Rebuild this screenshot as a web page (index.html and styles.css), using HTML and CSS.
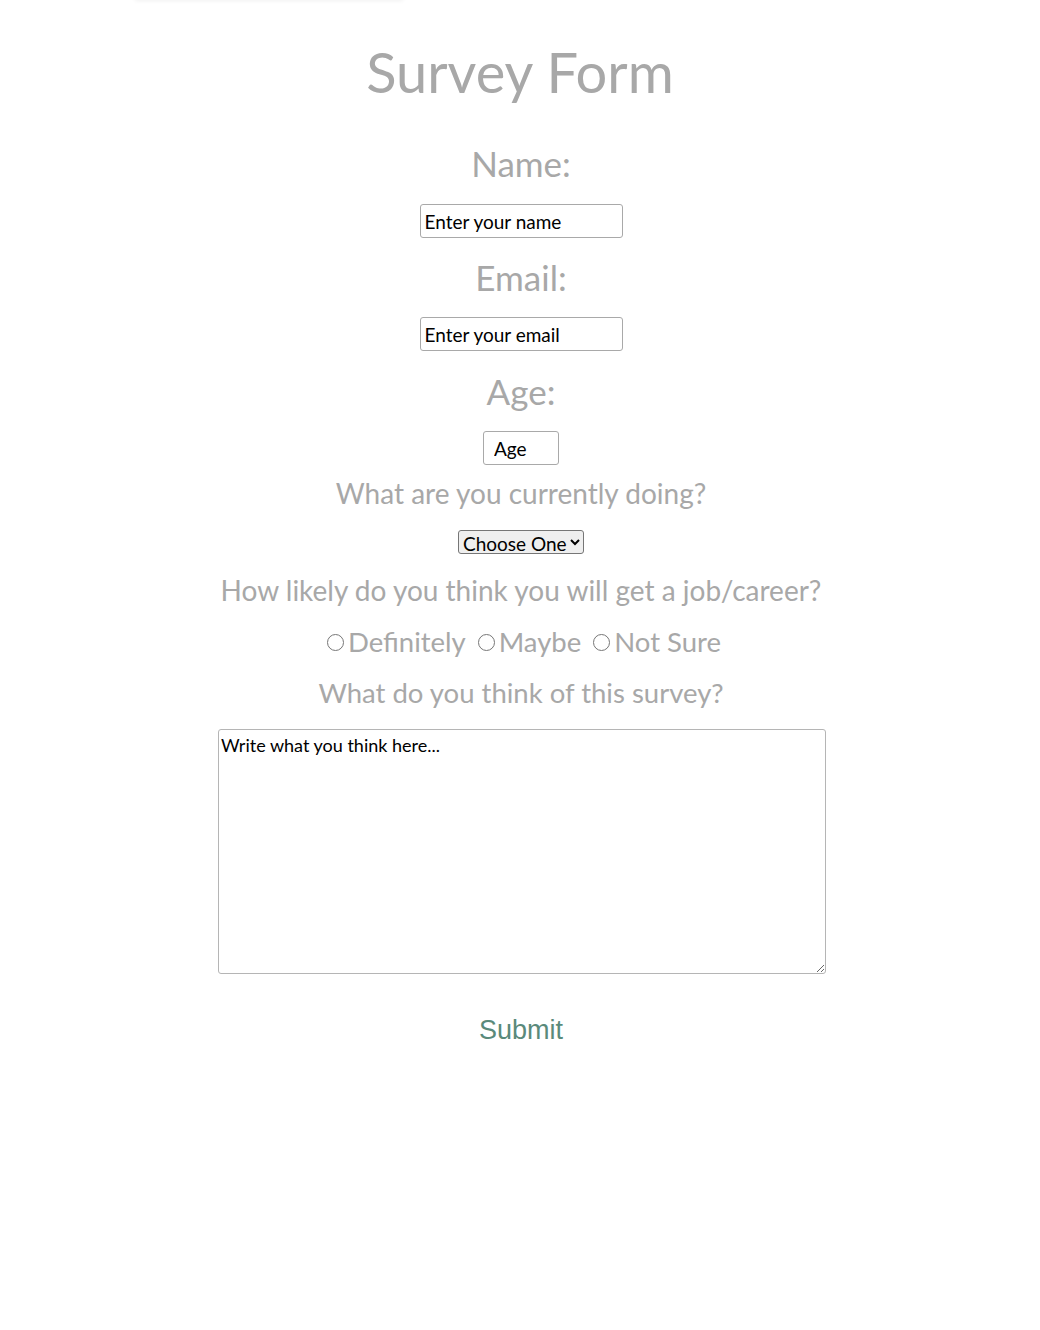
FILE: index.html
```html
<!DOCTYPE html>
<html lang="en">
<head>
<meta charset="utf-8">
<title>Survey Form</title>
<link rel="stylesheet" href="styles.css">
</head>
<body>
<div class="ghost"></div>
<main class="page">
  <h1 class="title">Survey Form</h1>
  <form class="form">
    <label class="label label-name" for="name">Name:</label>
    <input class="field" id="name" type="text" placeholder="Enter your name">
    <label class="label" for="email">Email:</label>
    <input class="field" id="email" type="email" placeholder="Enter your email">
    <label class="label label-age" for="age">Age:</label>
    <input class="field field-age" id="age" type="text" placeholder="Age">
    <label class="question q-doing" for="doing">What are you currently doing?</label>
    <select class="select" id="doing">
      <option>Choose One</option>
      <option>Student</option>
      <option>Working</option>
    </select>
    <p class="question q-likely">How likely do you think you will get a job/career?</p>
    <div class="radios">
      <label class="radio"><input type="radio" name="likely"><span>Definitely</span></label>
      <label class="radio"><input type="radio" name="likely"><span>Maybe</span></label>
      <label class="radio"><input type="radio" name="likely"><span>Not Sure</span></label>
    </div>
    <label class="question q-think" for="think">What do you think of this survey?</label>
    <textarea class="area" id="think" placeholder="Write what you think here..."></textarea>
    <button class="submit" type="submit">Submit</button>
  </form>
</main>
</body>
</html>
```
FILE: styles.css
```css
html, body {
  margin: 0;
  padding: 0;
  background: #fff;
}
body {
  font-family: Lato, "Open Sans", sans-serif;
  color: #a8a8a8;
  position: relative;
}
.ghost {
  position: absolute;
  left: 135px;
  top: -40px;
  width: 268px;
  height: 40px;
  box-shadow: 0 1px 4px rgba(0,0,0,0.06);
}
.page {
  display: flex;
  flex-direction: column;
  align-items: center;
}
.title {
  margin: 40px 0 0;
  font-size: 56px;
  line-height: 64px;
  font-weight: 400;
  color: #a8a8a8;
}
.form {
  box-sizing: border-box;
  display: flex;
  flex-direction: column;
  align-items: center;
  width: 100%;
  padding-left: 2px;
}
.label {
  display: block;
  font-size: 35px;
  line-height: 40px;
  margin: 19px 0 20px;
}
.label-name {
  margin: 39px 0 21px;
}
.label-age {
  margin-top: 20px;
}
.field {
  box-sizing: border-box;
  width: 203px;
  height: 34px;
  margin: 0;
  padding: 0 4px;
  border: 1px solid #a9a9a9;
  border-radius: 3px;
  font-family: Lato, sans-serif;
  font-size: 19px;
  color: #000;
}
.field::placeholder,
.area::placeholder {
  color: #000;
  opacity: 1;
}
.field-age {
  width: 76px;
  padding: 0 10px;
}
.question {
  display: block;
  font-size: 28px;
  line-height: 36px;
  margin: 0;
}
.q-doing { margin: 10px 0 19px; }
.q-likely { margin: 18px 0 16px; }
.q-think { margin: 15px 0 18px; font-size: 27.5px; }
.select {
  height: 24px;
  font-family: Lato, sans-serif;
  font-size: 19px;
  color: #000;
  margin: 0;
  border-radius: 3px;
}
.radios {
  display: flex;
  gap: 12px;
  padding-left: 6px;
  font-size: 27.5px;
  line-height: 36px;
}
.radio {
  display: flex;
  align-items: center;
}
.radio input {
  width: 17px;
  height: 17px;
  margin: 1px 4px 0 0;
}
.area {
  box-sizing: border-box;
  width: 608px;
  height: 245px;
  margin: 0 0 0 2px;
  padding: 2px 2px;
  border: 1px solid #b5b5b5;
  border-radius: 3px;
  font-family: Lato, sans-serif;
  font-size: 18px;
  line-height: 26px;
  color: #000;
}
.submit {
  margin: 41px 0 0;
  padding: 0;
  border: 0;
  background: none;
  font-family: "Liberation Sans", Arial, sans-serif;
  font-size: 27px;
  line-height: 30px;
  color: #5a8a7b;
  cursor: pointer;
}
```
